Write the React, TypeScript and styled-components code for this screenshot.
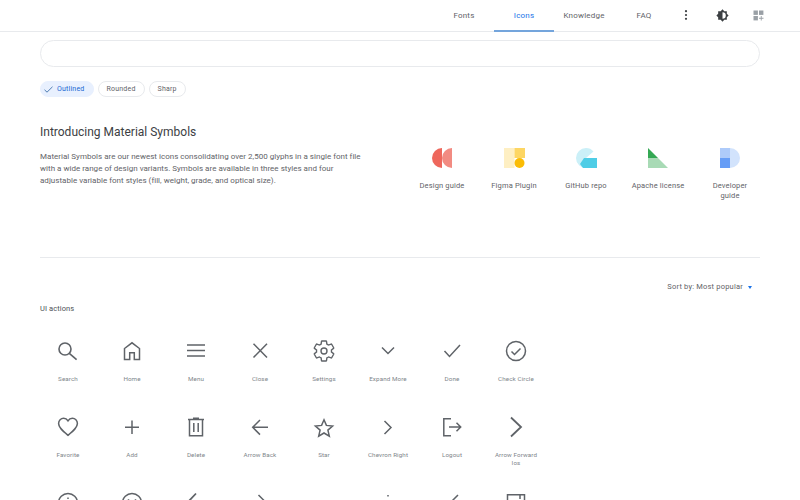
import * as React from 'react';
import styled, { createGlobalStyle } from 'styled-components';

const GlobalStyle = createGlobalStyle`
  html, body {
    margin: 0;
    height: 500px;
    overflow: hidden;
    background: #fff;
    font-family: Roboto, "Liberation Sans", sans-serif;
  }
`;

const Header = styled.header`
  display: flex;
  justify-content: flex-end;
  align-items: stretch;
  height: 31px;
  padding-right: 24px;
  border-bottom: 1px solid #e8eaed;
`;

const Tab = styled.a<{ $active?: boolean }>`
  display: flex;
  align-items: center;
  justify-content: center;
  box-sizing: border-box;
  width: 60px;
  height: 32px;
  padding-top: 1px;
  font-size: 8px;
  letter-spacing: 0.2px;
  color: ${(p) => (p.$active ? '#1a73e8' : '#5f6368')};
  border-bottom: 2px solid ${(p) => (p.$active ? '#74a5dc' : 'transparent')};
`;

const HeaderButton = styled.div`
  display: flex;
  align-items: center;
  justify-content: center;
  width: 36px;
  padding-bottom: 1px;
`;

const MoreButton = styled(HeaderButton)`
  width: 24px;
  margin-right: 6px;
`;

const Main = styled.main`
  padding: 8px 40px 0;
`;

const SearchBox = styled.div`
  height: 25px;
  border: 1px solid #e8eaed;
  border-radius: 14px;
`;

const Chips = styled.div`
  display: flex;
  gap: 4px;
  margin-top: 14px;
`;

const Chip = styled.div<{ $selected?: boolean }>`
  display: flex;
  align-items: center;
  gap: 3px;
  box-sizing: border-box;
  height: 16px;
  padding: ${(p) => (p.$selected ? '0 8px 0 2px' : '0 8px')};
  border: 1px solid ${(p) => (p.$selected ? '#e8f0fe' : '#e8eaed')};
  border-radius: 8px;
  background: ${(p) => (p.$selected ? '#e8f0fe' : '#fff')};
  color: ${(p) => (p.$selected ? '#1967d2' : '#5f6368')};
  font-size: 7px;
  letter-spacing: 0.2px;
`;

const Intro = styled.section`
  display: flex;
  justify-content: space-between;
  height: 133px;
  margin-top: 27px;
  border-bottom: 1px solid #e8eaed;
`;

const IntroText = styled.div`
  width: 324px;
`;

const Title = styled.h1`
  margin: 0;
  font-size: 12px;
  line-height: 16px;
  font-weight: 400;
  color: #3c4043;
`;

const Paragraph = styled.p`
  margin: 11px 0 0;
  font-size: 8px;
  line-height: 12px;
  letter-spacing: 0.02px;
  color: #5f6368;
`;

const Links = styled.div`
  display: flex;
  gap: 18px;
  padding: 24px 3px 0 0;
  align-items: flex-start;
`;

const LinkItem = styled.a`
  display: flex;
  flex-direction: column;
  align-items: center;
  width: 54px;
  font-size: 7.5px;
  line-height: 10px;
  letter-spacing: 0.15px;
  text-align: center;
  color: #5f6368;

  svg {
    margin-bottom: 13px;
  }
`;

const SortRow = styled.div`
  display: flex;
  justify-content: flex-end;
  align-items: center;
  gap: 5px;
  margin-top: 23px;
  padding-right: 8px;
  font-size: 7.5px;
  line-height: 12px;
  letter-spacing: 0.2px;
  color: #5f6368;
`;

const Caret = styled.span`
  width: 0;
  height: 0;
  border-left: 2.5px solid transparent;
  border-right: 2.5px solid transparent;
  border-top: 3px solid #1a73e8;
`;

const GroupName = styled.h2`
  margin: 11px 0 0;
  font-size: 7.5px;
  line-height: 10px;
  font-weight: 400;
  letter-spacing: 0.1px;
  color: #4d5156;
`;

const IconGrid = styled.div`
  display: grid;
  grid-template-columns: repeat(8, 64px);
  grid-auto-rows: 76px;
  margin: 25px 0 0 -4px;
`;

const IconCell = styled.div`
  display: flex;
  flex-direction: column;
  align-items: center;
  padding: 0 6px;
`;

const IconName = styled.span`
  margin-top: 12px;
  font-size: 6.25px;
  line-height: 8px;
  letter-spacing: 0.1px;
  text-align: center;
  color: #80868b;
`;

const Glyph: React.FC<{ children: React.ReactNode; width?: number }> = ({ children, width = 1.5 }) => (
  <svg width="24" height="24" viewBox="0 0 24 24" fill="none" stroke="#5f6368" strokeWidth={width}>
    {children}
  </svg>
);

const gearPath =
  'M19.43 12.98c.04-.32.07-.64.07-.98 0-.34-.03-.66-.07-.98l2.11-1.65c.19-.15.24-.42.12-.64l-2-3.46c-.09-.16-.26-.25-.44-.25-.06 0-.12.01-.17.03l-2.49 1c-.52-.4-1.08-.73-1.69-.98l-.38-2.65C14.46 2.18 14.25 2 14 2h-4c-.25 0-.46.18-.49.42l-.38 2.65c-.61.25-1.17.59-1.69.98l-2.49-1c-.06-.02-.12-.03-.18-.03-.17 0-.34.09-.43.25l-2 3.46c-.13.22-.07.49.12.64l2.11 1.65c-.04.32-.07.65-.07.98 0 .33.03.66.07.98l-2.11 1.65c-.19.15-.24.42-.12.64l2 3.46c.09.16.26.25.44.25.06 0 .12-.01.17-.03l2.49-1c.52.4 1.08.73 1.69.98l.38 2.65c.03.24.24.42.49.42h4c.25 0 .46-.18.49-.42l.38-2.65c.61-.25 1.17-.59 1.69-.98l2.49 1c.06.02.12.03.18.03.17 0 .34-.09.43-.25l2-3.46c.12-.22.07-.49-.12-.64l-2.11-1.65z';

const icons: { name: string; glyph: React.ReactNode }[] = [
  { name: 'Search', glyph: <Glyph width={1.6}><circle cx="9" cy="10" r="6" /><path d="M13.3 14.3 20.6 20.6" /></Glyph> },
  { name: 'Home', glyph: <Glyph><path d="M4.5 20.5V9.5L12 3.8l7.5 5.7v11h-5.2v-6.8H9.7v6.8z" /></Glyph> },
  { name: 'Menu', glyph: <Glyph><path d="M3 6h18M3 11.5h18M3 17h18" /></Glyph> },
  { name: 'Close', glyph: <Glyph><path d="M5.5 4.7 19 18.5M19 4.7 5.5 18.5" /></Glyph> },
  { name: 'Settings', glyph: <Glyph width={1.4}><path d={gearPath} /><circle cx="12" cy="12" r="3" /></Glyph> },
  { name: 'Expand More', glyph: <Glyph><path d="M6 8.5l6 6 6-6" /></Glyph> },
  { name: 'Done', glyph: <Glyph><path d="M4.5 12l5 5.5L20 6" /></Glyph> },
  { name: 'Check Circle', glyph: <Glyph><circle cx="12" cy="12" r="9.5" /><path d="M7.5 12.5l3 3 6-6" /></Glyph> },
  { name: 'Favorite', glyph: <Glyph><path d="M12 20.3C6 15.4 2.6 12.4 2.6 8.5c0-3 2.3-5.2 5-5.2 1.8 0 3.4.9 4.4 2.5 1-1.6 2.6-2.5 4.4-2.5 2.7 0 5 2.2 5 5.2 0 3.9-3.4 6.9-9.4 11.8z" /></Glyph> },
  { name: 'Add', glyph: <Glyph><path d="M12 5.5v13.5M5 12.3h14" /></Glyph> },
  { name: 'Delete', glyph: <Glyph><path d="M5.5 5v15.8h13V5M4 4.5h16M9 3.2h6M9.8 8v9M14.2 8v9" /></Glyph> },
  { name: 'Arrow Back', glyph: <Glyph><path d="M20 12.3H5.5M12 5 4.7 12.3 12 19.6" /></Glyph> },
  { name: 'Star', glyph: <Glyph><path d="M12 4.8l2.4 5.6 6.2.6-4.7 4.1 1.4 6.1-5.3-3.2-5.3 3.2 1.4-6.1L3.4 11l6.2-.6z" /></Glyph> },
  { name: 'Chevron Right', glyph: <Glyph><path d="M8.5 6l6.5 6.5L8.5 19" /></Glyph> },
  { name: 'Logout', glyph: <Glyph><path d="M11 3.7H3.8v17H11M9 12h11.5M16.5 7.8l4.2 4.2-4.2 4.2" /></Glyph> },
  { name: 'Arrow Forward Ios', glyph: <Glyph width={1.8}><path d="M7 2.5 17 12 7 21.5" /></Glyph> },
  { name: 'Info', glyph: <Glyph><circle cx="12" cy="12" r="9.5" /><path d="M12 6.6v1.4M12 10.5V17" /></Glyph> },
  { name: 'Mood', glyph: <Glyph><circle cx="12" cy="12" r="9.5" /><path d="M8.5 8.2v1.6M15.5 8.2v1.6M7.5 14.5c2 3 7 3 9 0" /></Glyph> },
  { name: 'Arrow Back Ios', glyph: <Glyph width={1.8}><path d="M12 2.5 3 12l9 9.5" /></Glyph> },
  { name: 'Arrow Right', glyph: <Glyph><path d="M10.5 4l8 8-8 8" /></Glyph> },
  { name: 'Expand Less', glyph: <Glyph><path d="M6 15.5l6-5 6 5" /></Glyph> },
  { name: 'More Vert', glyph: <Glyph><path d="M12 4v1.5M12 11.2v1.5M12 18.5V20" /></Glyph> },
  { name: 'Chevron Left', glyph: <Glyph><path d="M18 4l-8 8 8 8" /></Glyph> },
  { name: 'Open In New', glyph: <Glyph><path d="M3.5 21V3.7h17V21M16 3.7V8" /></Glyph> },
];

const App: React.FC = () => (
  <>
    <GlobalStyle />
    <Header>
      <Tab>Fonts</Tab>
      <Tab $active>Icons</Tab>
      <Tab>Knowledge</Tab>
      <Tab>FAQ</Tab>
      <MoreButton>
        <svg width="12" height="12" viewBox="0 0 12 12" fill="#3c4043">
          <circle cx="6" cy="2.2" r="1.1" />
          <circle cx="6" cy="6" r="1.1" />
          <circle cx="6" cy="9.8" r="1.1" />
        </svg>
      </MoreButton>
      <HeaderButton>
        <svg width="13" height="13" viewBox="0 0 24 24">
          <path fill="#3c4043" d="M20 8.69V4h-4.69L12 .69 8.69 4H4v4.69L.69 12 4 15.31V20h4.69L12 23.31 15.31 20H20v-4.69L23.31 12 20 8.69z" />
          <path fill="#fff" d="M12 6a6 6 0 0 1 0 12z" />
        </svg>
      </HeaderButton>
      <HeaderButton>
        <svg width="11" height="11" viewBox="0 0 11 11" fill="#9aa0a6">
          <rect x="0.5" y="0.5" width="4.4" height="4.4" />
          <rect x="6" y="0.5" width="4.4" height="4.4" />
          <rect x="0.5" y="6" width="4.4" height="4.4" />
          <path d="M7.8 6h.9v1.8h1.8v.9H8.7v1.8h-.9V8.7H6v-.9h1.8z" />
        </svg>
      </HeaderButton>
    </Header>
    <Main>
      <SearchBox />
      <Chips>
        <Chip $selected>
          <svg width="11" height="11" viewBox="0 0 11 11" fill="none" stroke="#3c6ea8" strokeWidth="0.9">
            <path d="M1.5 5.8 4 8.2 9.5 2.8" />
          </svg>
          Outlined
        </Chip>
        <Chip>Rounded</Chip>
        <Chip>Sharp</Chip>
      </Chips>
      <Intro>
        <IntroText>
          <Title>Introducing Material Symbols</Title>
          <Paragraph>
            Material Symbols are our newest icons consolidating over 2,500 glyphs in a single font file with a wide
            range of design variants. Symbols are available in three styles and four adjustable variable font styles
            (fill, weight, grade, and optical size).
          </Paragraph>
        </IntroText>
        <Links>
          <LinkItem>
            <svg width="20" height="20" viewBox="0 0 20 20">
              <path fill="#ee675c" d="M10 0a10 10 0 0 0 0 20z" />
              <path fill="#f28b82" d="M20 0a10 10 0 0 0 -10 10 10 10 0 0 0 10 10z" />
            </svg>
            Design guide
          </LinkItem>
          <LinkItem>
            <svg width="21" height="20" viewBox="0 0 21 20">
              <rect width="10.5" height="20" fill="#feefc3" />
              <rect x="10.5" width="10.5" height="10" fill="#fdd663" />
              <circle cx="15.5" cy="15" r="5" fill="#fbbc04" />
            </svg>
            Figma Plugin
          </LinkItem>
          <LinkItem>
            <svg width="21" height="20" viewBox="0 0 21 20">
              <path fill="#cbf0f8" d="M10 0a10 10 0 0 1 7.5 3.4L10 10l-4 6 4 4a10 10 0 0 1 0-20z" />
              <path fill="#cbf0f8" d="M10 10h4v10h-4a10 10 0 0 1-7-3z" />
              <path fill="#4ecde6" d="M8 10h13v10H7l-3-4z" />
            </svg>
            GitHub repo
          </LinkItem>
          <LinkItem>
            <svg width="20" height="20" viewBox="0 0 20 20">
              <path fill="#a8dab5" d="M0 10h10l10 10H0z" />
              <path fill="#34a853" d="M0 0l10 10H0z" />
            </svg>
            Apache license
          </LinkItem>
          <LinkItem>
            <svg width="20" height="20" viewBox="0 0 20 20">
              <path fill="#d2e3fc" d="M10 0a10 10 0 0 1 0 20z" />
              <rect width="10" height="10" fill="#aecbfa" />
              <rect y="10" width="10" height="10" fill="#669df6" />
            </svg>
            Developer guide
          </LinkItem>
        </Links>
      </Intro>
      <SortRow>
        Sort by: Most popular
        <Caret />
      </SortRow>
      <GroupName>UI actions</GroupName>
      <IconGrid>
        {icons.map((icon) => (
          <IconCell key={icon.name}>
            {icon.glyph}
            <IconName>{icon.name}</IconName>
          </IconCell>
        ))}
      </IconGrid>
    </Main>
  </>
);

export default App;
